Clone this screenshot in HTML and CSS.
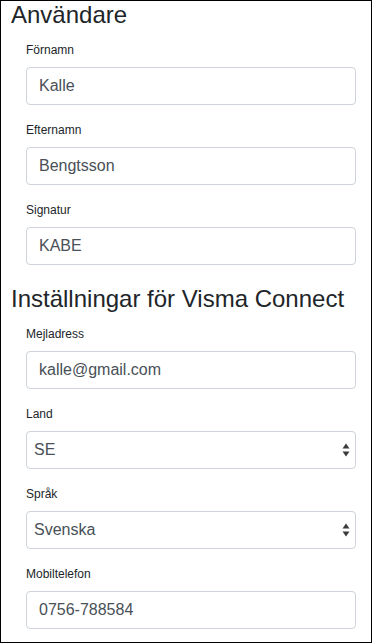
FILE: index.html
```html
<!DOCTYPE html>
<html>
<head>
    <meta charset="utf-8">
    <link rel="stylesheet" href="styles.css">
    <title>Användare</title>
</head>
<body>
    <div class="panel">
        <h2 class="section-title">Användare</h2>
        <div class="field">
            <label for="fornamn">Förnamn</label>
            <input type="text" id="fornamn" class="form-input" value="Kalle">
        </div>
        <div class="field">
            <label for="efternamn">Efternamn</label>
            <input type="text" id="efternamn" class="form-input" value="Bengtsson">
        </div>
        <div class="field">
            <label for="signatur">Signatur</label>
            <input type="text" id="signatur" class="form-input" value="KABE">
        </div>

        <h2 class="section-title second">Inställningar för Visma Connect</h2>
        <div class="field">
            <label for="mejl">Mejladress</label>
            <input type="text" id="mejl" class="form-input" value="kalle@gmail.com">
        </div>
        <div class="field">
            <label for="land">Land</label>
            <div class="select-wrap">
                <select id="land" class="form-input form-select">
                    <option>SE</option>
                </select>
                <svg class="select-arrows" width="8" height="14" viewBox="0 0 8 14">
                    <path d="M4 0.5 L7.5 5.5 L0.5 5.5 Z" fill="#3b3b3b"/>
                    <path d="M4 13.5 L7.5 8.5 L0.5 8.5 Z" fill="#3b3b3b"/>
                </svg>
            </div>
        </div>
        <div class="field">
            <label for="sprak">Språk</label>
            <div class="select-wrap">
                <select id="sprak" class="form-input form-select">
                    <option>Svenska</option>
                </select>
                <svg class="select-arrows" width="8" height="14" viewBox="0 0 8 14">
                    <path d="M4 0.5 L7.5 5.5 L0.5 5.5 Z" fill="#3b3b3b"/>
                    <path d="M4 13.5 L7.5 8.5 L0.5 8.5 Z" fill="#3b3b3b"/>
                </svg>
            </div>
        </div>
        <div class="field">
            <label for="mobil">Mobiltelefon</label>
            <input type="text" id="mobil" class="form-input" value="0756-788584">
        </div>
    </div>
</body>
</html>
```

FILE: styles.css
```css
body {
    margin: 0;
    font-family: "Liberation Sans", Arial, sans-serif;
    color: #212529;
    background-color: #fff;
}
.panel {
    box-sizing: border-box;
    width: 372px;
    height: 643px;
    border: 1px solid #000;
    padding: 0 15px 0 10px;
    overflow: hidden;
}
.section-title {
    font-size: 24px;
    font-weight: normal;
    line-height: 1.2;
    margin: 0 0 11px 0;
}
.section-title.second {
    margin-top: 20px;
}
.field {
    margin: 0 0 16px 15px;
}
label {
    display: block;
    font-size: 12px;
    line-height: 18px;
    margin-bottom: 8px;
}
.form-input {
    box-sizing: border-box;
    display: block;
    width: 100%;
    height: 38px;
    padding: 6px 12px;
    font-family: "Liberation Sans", Arial, sans-serif;
    font-size: 16px;
    color: #495057;
    background-color: #fff;
    border: 1px solid #ced4da;
    border-radius: 4px;
    margin: 0;
}
.select-wrap {
    position: relative;
}
.form-select {
    -webkit-appearance: none;
    appearance: none;
    padding-left: 7px;
}
.select-arrows {
    position: absolute;
    right: 6px;
    top: 12px;
    pointer-events: none;
}
```
